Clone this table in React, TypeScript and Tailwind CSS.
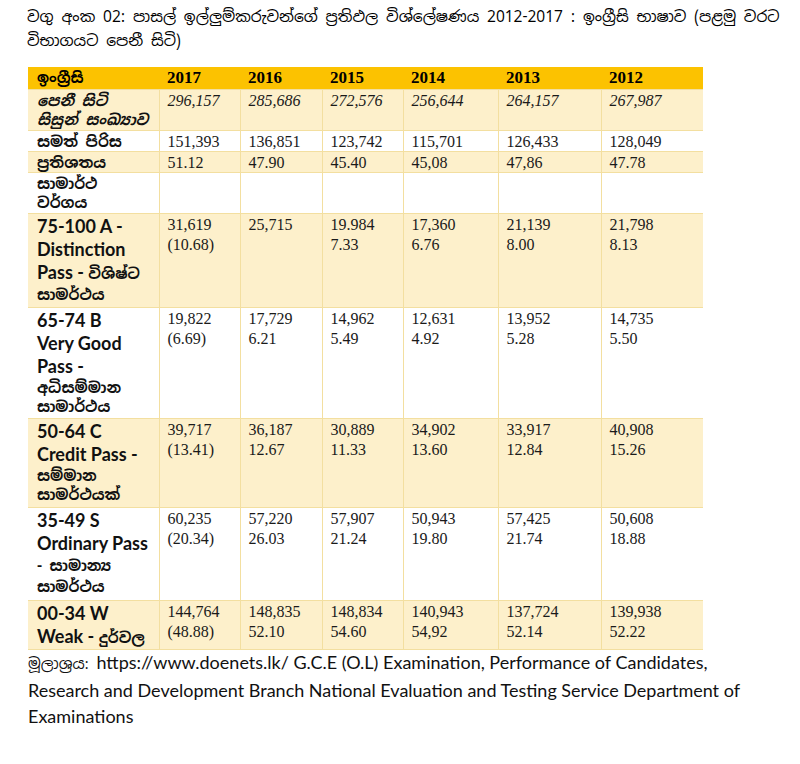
import React from "react";

const sinhala = "'Noto Sans Sinhala','Iskoola Pota','Noto Sans','DejaVu Sans',sans-serif";

const S = ({ children }: { children: React.ReactNode }) => (
  <span className="text-[15px] leading-[19px] block" style={{ fontFamily: sinhala }}>
    {children}
  </span>
);

type Row = {
  label: React.ReactNode;
  cells: string[][];
  h: string;
  bg: string;
  italic?: boolean;
};

const rows: Row[] = [
  {
    label: (
      <span className="italic">
        <S>පෙනී සිටි</S>
        <S>සිසුන් සංඛ්‍යාව</S>
      </span>
    ),
    cells: [["296,157"], ["285,686"], ["272,576"], ["256,644"], ["264,157"], ["267,987"]],
    h: "h-[41px]",
    bg: "bg-[#fdf0cb]",
    italic: true,
  },
  {
    label: <S>සමත් පිරිස</S>,
    cells: [["151,393"], ["136,851"], ["123,742"], ["115,701"], ["126,433"], ["128,049"]],
    h: "h-[21px]",
    bg: "bg-white",
  },
  {
    label: <S>ප්‍රතිශතය</S>,
    cells: [["51.12"], ["47.90"], ["45.40"], ["45,08"], ["47,86"], ["47.78"]],
    h: "h-[21px]",
    bg: "bg-[#fdf0cb]",
  },
  {
    label: (
      <>
        <S>සාමාර්ථ</S>
        <S>වර්ගය</S>
      </>
    ),
    cells: [[], [], [], [], [], []],
    h: "h-[41px]",
    bg: "bg-white",
  },
  {
    label: (
      <>
        <span className="block">75-100 A -</span>
        <span className="block">Distinction</span>
        <span className="block">
          Pass - <span className="text-[15px]" style={{ fontFamily: sinhala }}>විශිෂ්ට</span>
        </span>
        <S>සාමර්ථය</S>
      </>
    ),
    cells: [["31,619", "(10.68)"], ["25,715"], ["19.984", "7.33"], ["17,360", "6.76"], ["21,139", "8.00"], ["21,798", "8.13"]],
    h: "h-[94px]",
    bg: "bg-[#fdf0cb]",
  },
  {
    label: (
      <>
        <span className="block">65-74 B</span>
        <span className="block">Very Good</span>
        <span className="block">Pass -</span>
        <S>අධිසම්මාන</S>
        <S>සාමාර්ථය</S>
      </>
    ),
    cells: [["19,822", "(6.69)"], ["17,729", "6.21"], ["14,962", "5.49"], ["12,631", "4.92"], ["13,952", "5.28"], ["14,735", "5.50"]],
    h: "h-[111px]",
    bg: "bg-white",
  },
  {
    label: (
      <>
        <span className="block">50-64 C</span>
        <span className="block">Credit Pass -</span>
        <S>සම්මාන</S>
        <S>සාමර්ථයක්</S>
      </>
    ),
    cells: [["39,717", "(13.41)"], ["36,187", "12.67"], ["30,889", "11.33"], ["34,902", "13.60"], ["33,917", "12.84"], ["40,908", "15.26"]],
    h: "h-[89px]",
    bg: "bg-[#fdf0cb]",
  },
  {
    label: (
      <>
        <span className="block">35-49 S</span>
        <span className="block">Ordinary Pass</span>
        <span className="block text-[15px] leading-[22px]" style={{ fontFamily: sinhala }}>- සාමාන්‍ය</span>
        <S>සාමර්ථය</S>
      </>
    ),
    cells: [["60,235", "(20.34)"], ["57,220", "26.03"], ["57,907", "21.24"], ["50,943", "19.80"], ["57,425", "21.74"], ["50,608", "18.88"]],
    h: "h-[93px]",
    bg: "bg-white",
  },
  {
    label: (
      <>
        <span className="block">00-34 W</span>
        <span className="block">
          Weak - <span className="text-[15px]" style={{ fontFamily: sinhala }}>දුර්වල</span>
        </span>
      </>
    ),
    cells: [["144,764", "(48.88)"], ["148,835", "52.10"], ["148,834", "54.60"], ["140,943", "54,92"], ["137,724", "52.14"], ["139,938", "52.22"]],
    h: "h-[47px]",
    bg: "bg-[#fdf0cb]",
  },
];

const years = ["2017", "2016", "2015", "2014", "2013", "2012"];
const colW = ["w-[131px]", "w-[81px]", "w-[82px]", "w-[81px]", "w-[95px]", "w-[103px]", "w-[102px]"];

export default function App() {
  return (
    <div className="w-[800px] h-[764px] bg-white text-black overflow-hidden">
      <div className="pl-[27px] pt-[5px] text-[15.5px] leading-[24px] whitespace-nowrap" style={{ fontFamily: sinhala }}>
        <div>වගු අංක 02: පාසල් ඉල්ලුම්කරුවන්ගේ ප්‍රතිඵල විශ්ලේෂණය 2012-2017 : ඉංග්‍රීසි භාෂාව (පළමු වරට</div>
        <div>විභාගයට පෙනී සිටි)</div>
      </div>
      <table className="ml-[28px] mt-[14px] border-collapse table-fixed w-[675px]">
        <colgroup>
          {colW.map((w, i) => (
            <col key={i} className={w} />
          ))}
        </colgroup>
        <thead>
          <tr className="h-[22px] bg-[#fcc200]">
            <th
              className="text-left align-middle pl-[9px] font-bold text-[15px] leading-[22px] p-0"
              style={{ fontFamily: sinhala }}
            >
              ඉංග්‍රීසි
            </th>
            {years.map((y) => (
              <th
                key={y}
                className="text-left align-middle pl-[8px] p-0 font-bold text-[17px] leading-[22px] font-['Liberation_Serif',serif]"
              >
                {y}
              </th>
            ))}
          </tr>
        </thead>
        <tbody>
          {rows.map((r, i) => (
            <tr key={i} className={`${r.h} ${r.bg}`}>
              <td
                className="align-top pl-[9px] pr-[2px] pt-[1px] pb-0 border border-[#f3dfa0] border-l-0 font-bold text-[18px] leading-[23px] text-[#111]"
                style={{ fontFamily: "'Lato','Noto Sans Sinhala','Noto Sans',sans-serif" }}
              >
                {r.label}
              </td>
              {r.cells.map((c, j) => (
                <td
                  key={j}
                  className={`align-top pl-[8px] pt-[1px] pb-0 border border-[#f3dfa0] ${j === 5 ? "border-r-0" : ""} text-[16px] leading-[19px] text-[#1a1a1a] font-['Liberation_Serif',serif] ${r.italic ? "italic" : ""}`}
                >
                  {c.map((line, k) => (
                    <div key={k} className={k === 1 ? "mt-[1px]" : ""}>{line}</div>
                  ))}
                </td>
              ))}
            </tr>
          ))}
        </tbody>
      </table>
      <div
        className="pl-[28px] -mt-[1px] text-[18px] leading-[26px] text-[#111] whitespace-nowrap"
        style={{ fontFamily: "'Lato','Noto Sans Sinhala',sans-serif" }}
      >
        <div>
          <span style={{ fontFamily: sinhala }} className="text-[15px]">මූලාශ්‍රය: </span>
          https://www.doenets.lk/ G.C.E (O.L) Examination, Performance of Candidates,
        </div>
        <div>Research and Development Branch National Evaluation and Testing Service Department of</div>
        <div>Examinations</div>
      </div>
    </div>
  );
}
